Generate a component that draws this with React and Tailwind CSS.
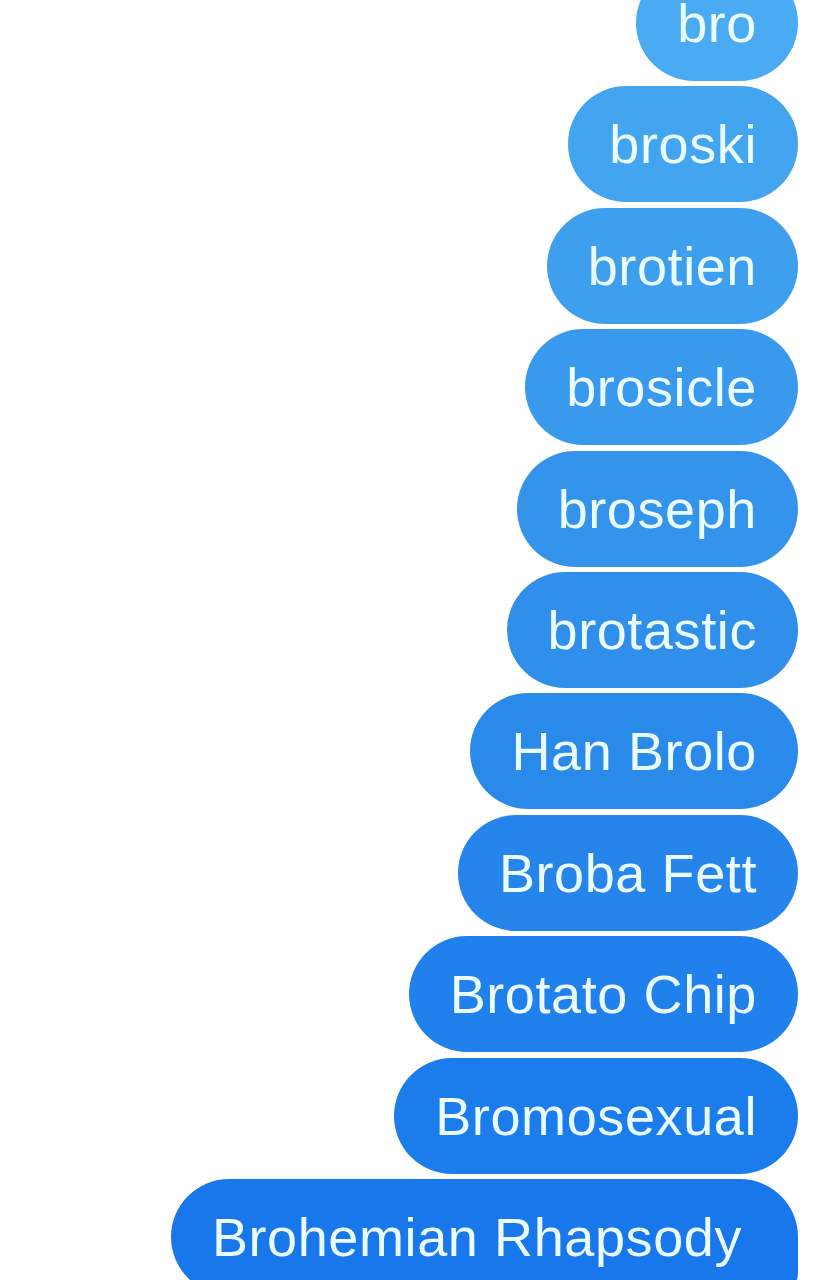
const msgs = [
  { t: "bro", c: "bg-[#4aaaf2]" },
  { t: "broski", c: "bg-[#43a5f0]" },
  { t: "brotien", c: "bg-[#3e9fef]" },
  { t: "brosicle", c: "bg-[#3999ed]" },
  { t: "broseph", c: "bg-[#3494ec]" },
  { t: "brotastic", c: "bg-[#2f8feb]" },
  { t: "Han Brolo", c: "bg-[#2a8aea]" },
  { t: "Broba Fett", c: "bg-[#2585eb]" },
  { t: "Brotato Chip", c: "bg-[#2080ec]" },
  { t: "Bromosexual", c: "bg-[#1b7cec]" },
  { t: "Brohemian Rhapsody", c: "bg-[#1777eb]", last: true },
];

export default function App() {
  return (
    <div
      className="w-[826px] h-[1280px] overflow-hidden bg-white"
      style={{ fontFamily: '"Liberation Sans", Arial, sans-serif' }}
    >
      <div className="flex flex-col items-end gap-[5.4px] pr-[28px] -mt-[35px]">
        {msgs.map((m) => (
          <div
            key={m.t}
            className={`${m.c} h-[116px] flex items-center text-[54px] leading-none tracking-[0.6px] text-[#eafcff] whitespace-nowrap ${
              m.last
                ? "pl-[41px] pr-[56px] rounded-tl-[58px] rounded-bl-[58px] rounded-tr-[58px] rounded-br-[22px]"
                : "px-[41px] rounded-full"
            }`}
          >
            {m.t}
          </div>
        ))}
      </div>
    </div>
  );
}
